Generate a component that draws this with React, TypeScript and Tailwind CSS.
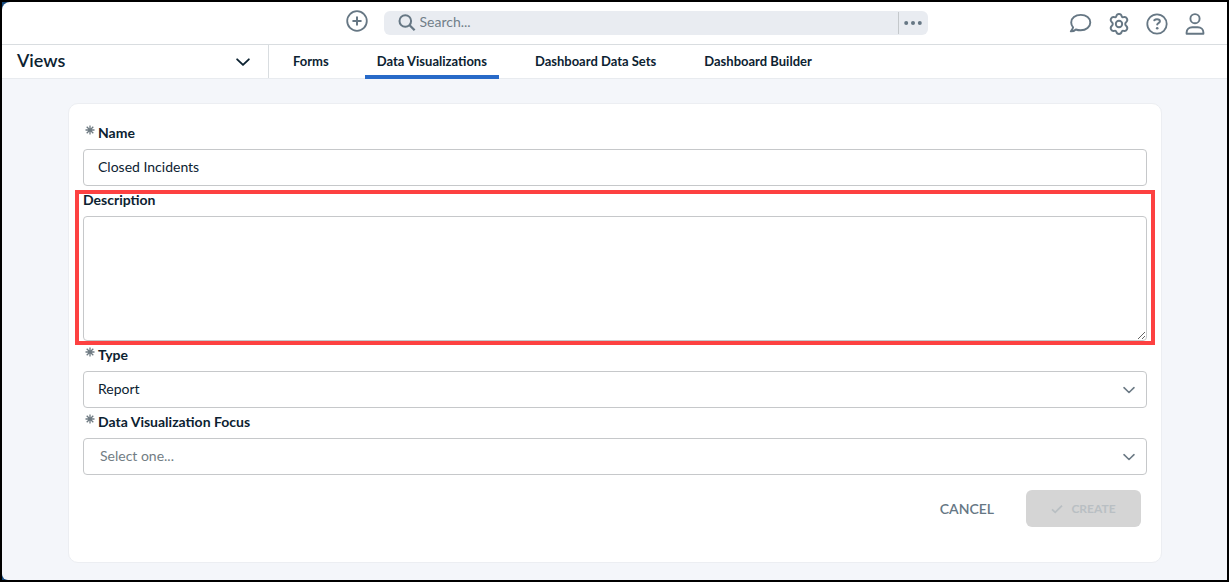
import React, { useState } from "react";

const tabs = ["Forms", "Data Visualizations", "Dashboard Data Sets", "Dashboard Builder"];

function Chevron({ className }: { className: string }) {
  return (
    <svg className={className} viewBox="0 0 12 12" fill="none" stroke="currentColor" aria-hidden="true">
      <path d="M1 3.700 6 8.500l5-4.800" strokeWidth="1.600" strokeLinecap="round" strokeLinejoin="round" />
    </svg>
  );
}

function PlusIcon() {
  return (
    <svg className="size-[22px]" viewBox="0 0 22 22" fill="none" stroke="currentColor" strokeWidth="1.8" strokeLinecap="round" aria-hidden="true">
      <circle cx="11" cy="11" r="9.8" />
      <path d="M11 7.2v7.6M7.2 11h7.6" strokeWidth="2" />
    </svg>
  );
}

function SearchIcon() {
  return (
    <svg className="size-[18px] shrink-0" viewBox="0 0 18 18" fill="none" stroke="currentColor" strokeWidth="2" aria-hidden="true">
      <circle cx="7.3" cy="7" r="5.800" />
      <path d="m11.600 11.300 5 5" strokeWidth="2.300" />
    </svg>
  );
}

function ChatIcon() {
  return (
    <svg className="size-6" viewBox="0 0 24 24" fill="none" stroke="currentColor" strokeWidth="1.900" strokeLinejoin="round" aria-hidden="true">
      <path d="M11.800 2.900C6.200 2.900 2.200 6.200 2.200 10.400c0 1.900.8 3.600 1.900 4.900-.3 1.500-1.100 2.800-2.300 4.100 2 .1 3.600-.5 5-1.900 1.400.5 3 .8 4.900.8 5.500 0 9.600-3.500 9.600-7.900s-4-7.500-9.500-7.500Z" />
    </svg>
  );
}

function GearIcon() {
  return (
    <svg className="size-6" viewBox="0 0 24 24" fill="none" stroke="currentColor" strokeWidth="1.900" strokeLinejoin="round" aria-hidden="true">
      <path d="M9.300 4.200c.3-1.300 1.300-2.200 2.700-2.200s2.400.9 2.700 2.200c.2.900 1 1.300 1.900 1 1.300-.4 2.600.1 3.300 1.300.7 1.200.4 2.500-.6 3.500-.9.800-1.100 1.300-1.100 2s.2 1.200 1.100 2c1 1 1.300 2.300.6 3.500-.7 1.200-2 1.700-3.300 1.300-.9-.3-1.700.1-1.900 1-.3 1.300-1.300 2.200-2.700 2.200s-2.400-.9-2.700-2.200c-.2-.9-1-1.300-1.900-1-1.300.4-2.600-.1-3.300-1.300-.7-1.200-.4-2.500.6-3.500.9-.8 1.100-1.300 1.100-2s-.2-1.200-1.100-2c-1-1-1.300-2.300-.6-3.500.7-1.200 2-1.700 3.300-1.300.9.300 1.700-.1 1.900-1Z" />
      <circle cx="12" cy="12" r="3.200" />
    </svg>
  );
}

function HelpIcon() {
  return (
    <svg className="size-6" viewBox="0 0 24 24" fill="none" stroke="currentColor" strokeWidth="1.800" strokeLinecap="round" strokeLinejoin="round" aria-hidden="true">
      <circle cx="12" cy="12" r="9.700" />
      <path d="M9.300 8.200C10 7.500 11 7.200 12 7.200c1.700 0 2.900.8 2.900 2.100 0 1.800-2.700 1.700-2.700 3.300" strokeWidth="2" />
      <circle cx="12.200" cy="16.200" r="1.300" fill="currentColor" stroke="none" />
    </svg>
  );
}

function UserIcon() {
  return (
    <svg className="size-6" viewBox="0 0 24 24" fill="none" stroke="currentColor" strokeWidth="1.900" strokeLinejoin="round" aria-hidden="true">
      <circle cx="12" cy="6.700" r="4.600" />
      <path d="M3.600 21.800v-1.300c0-3.200 2.500-5.300 5.600-5.300h5.600c3.100 0 5.600 2.100 5.600 5.300v1.300Z" />
    </svg>
  );
}

function Label({ htmlFor, required, children }: { htmlFor: string; required?: boolean; children: string }) {
  return (
    <label htmlFor={htmlFor} className="flex h-[30px] items-start pt-1 text-sm leading-5 font-bold">
      {required && (
        <svg className="mt-0.5 mr-[3px] ml-0.5 h-[10px] w-[10px]" viewBox="0 0 10 10" stroke="#6e7a82" strokeWidth="1.300" aria-hidden="true">
          <path d="M5 .5v9M.5 5h9M1.700 1.700l6.600 6.600M8.300 1.700 1.700 8.300" />
        </svg>
      )}
      {children}
    </label>
  );
}

const control = "w-full rounded border border-[#c6c8ca] bg-white text-sm outline-none";

function SelectField({ id, placeholder, options }: { id: string; placeholder?: string; options: string[] }) {
  const [value, setValue] = useState(placeholder ? "" : options[0]);
  return (
    <div className="grid items-center">
      <select
        id={id}
        value={value}
        onChange={(e) => setValue(e.target.value)}
        className={`${control} col-start-1 row-start-1 h-[37px] appearance-none pr-10 pb-0.5 ${value ? "pl-[14px]" : "pl-4 text-[#727d84]"}`}
      >
        {placeholder && <option value="">{placeholder}</option>}
        {options.map((o) => (
          <option key={o}>{o}</option>
        ))}
      </select>
      <Chevron className="pointer-events-none col-start-1 row-start-1 mr-3 size-3 justify-self-end text-[#6c7a85]" />
    </div>
  );
}

export default function App() {
  const [active, setActive] = useState(tabs[1]);
  return (
    <div className="flex min-h-screen flex-col border-2 border-black bg-[#174a7c] font-['Lato','Noto_Sans',sans-serif] text-[#0c2231]">
      <header className="grid h-[43px] grid-cols-[1fr_auto_1fr] items-start rounded-tl-lg border-b border-[#d9dde0] bg-white text-[#667784]">
        <div />
        <div className="ml-11 flex items-start gap-4 pt-2">
          <button type="button" aria-label="Add">
            <PlusIcon />
          </button>
          <div className="mt-px flex h-6 w-[544px] items-center rounded-md bg-[#e9ecf1] pl-[14px]">
            <SearchIcon />
            <input type="search" aria-label="Search" placeholder="Search..." className="ml-1 min-w-0 flex-1 bg-transparent pb-0.5 text-sm outline-none placeholder:text-[#727f89]" />
            <button type="button" aria-label="Search options" className="flex h-[22px] w-[30px] items-center justify-center border-l border-[#c4c8cb]">
              <svg className="h-1 w-[18px]" viewBox="0 0 18 4" fill="currentColor" aria-hidden="true">
                <circle cx="2.200" cy="2" r="2" />
                <circle cx="9" cy="2" r="2" />
                <circle cx="15.800" cy="2" r="2" />
              </svg>
            </button>
          </div>
        </div>
        <div className="flex gap-[14px] justify-self-end pt-[10px] pr-5">
          <button type="button" aria-label="Messages"><ChatIcon /></button>
          <button type="button" aria-label="Settings"><GearIcon /></button>
          <button type="button" aria-label="Help"><HelpIcon /></button>
          <button type="button" aria-label="Account"><UserIcon /></button>
        </div>
      </header>

      <div className="flex h-[34px] border-b border-[#e8ebef] bg-white">
        <button type="button" className="flex w-[267px] items-center justify-between border-r border-[#d9dde0] pr-[18px] pb-1 pl-[15px] text-lg leading-6 font-semibold">
          Views
          <Chevron className="mt-1 size-[14px]" />
        </button>
        <nav className="flex gap-6 pl-3 text-[13px] font-bold">
          {tabs.map((t) => (
            <a
              key={t}
              href="#"
              aria-current={t === active ? "page" : undefined}
              onClick={(e) => {
                e.preventDefault();
                setActive(t);
              }}
              className={`h-[34px] border-b-4 px-3 pt-1.5 leading-5 ${t === active ? "border-[#286ac8]" : "border-transparent"}`}
            >
              {t}
            </a>
          ))}
        </nav>
      </div>

      <main className="flex-1 rounded-bl-md bg-[#f4f6fa] pt-[24px] pr-[65px] pb-[17px] pl-[66px]">
        <form className="rounded-[10px] border border-[#eceef2] bg-white px-[14px] pt-[15px] pb-[35px]" onSubmit={(e) => e.preventDefault()}>
          <Label htmlFor="name" required>Name</Label>
          <input id="name" type="text" defaultValue="Closed Incidents" className={`${control} block h-[37px] px-[14px] pb-0.5`} />
          <div className="relative">
            <Label htmlFor="description">Description</Label>
            <textarea id="description" className={`${control} block h-[125px] resize-y px-[14px] py-2`} />
            <div className="pointer-events-none absolute -inset-x-2 top-1 -bottom-1 border-4 border-[#fd4141]" />
          </div>
          <Label htmlFor="type" required>Type</Label>
          <SelectField id="type" options={["Report"]} />
          <Label htmlFor="focus" required>Data Visualization Focus</Label>
          <SelectField id="focus" placeholder="Select one..." options={[]} />
          <div className="mt-[15px] mr-1.5 flex items-center justify-end gap-8">
            <button type="button" className="text-sm font-semibold text-[#667784]">CANCEL</button>
            <button type="submit" disabled className="flex h-[37px] w-[115px] items-center justify-center gap-2 rounded-md bg-[#d5d5d5] text-xs font-bold text-[#b9bfc3]">
              <svg className="size-3" viewBox="0 0 12 12" fill="none" stroke="currentColor" strokeWidth="1.800" aria-hidden="true">
                <path d="m1 6.300 3.200 3L11 2.700" />
              </svg>
              CREATE
            </button>
          </div>
        </form>
      </main>
    </div>
  );
}
